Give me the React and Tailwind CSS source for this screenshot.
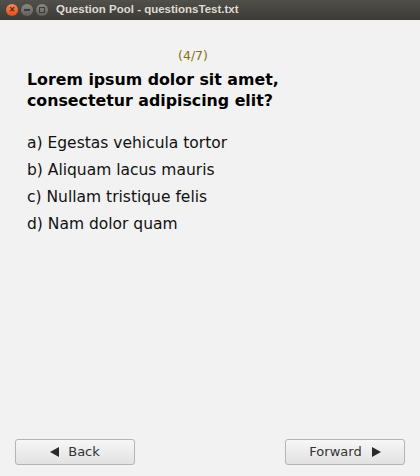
export default function App() {
  const options = [
    "a) Egestas vehicula tortor",
    "b) Aliquam lacus mauris",
    "c) Nullam tristique felis",
    "d) Nam dolor quam",
  ];

  return (
    <div className="w-[420px] h-[476px] flex flex-col bg-[#f2f2f2] overflow-hidden" style={{ fontFamily: '"DejaVu Sans", sans-serif' }}>
      {/* window title bar */}
      <div className="h-[20px] flex items-center bg-gradient-to-b from-[#504f4a] to-[#3c3b37] px-[6px]">
        <div className="flex items-center gap-[3px]">
          <span className="w-[12px] h-[12px] rounded-full bg-gradient-to-b from-[#f58a5c] to-[#e04c13] flex items-center justify-center text-[8px] leading-none text-[#5a200a] font-bold">×</span>
          <span className="w-[12px] h-[12px] rounded-full bg-gradient-to-b from-[#8a8983] to-[#62615c] flex items-center justify-center">
            <span className="w-[6px] h-[2px] bg-[#3c3b37]" />
          </span>
          <span className="w-[12px] h-[12px] rounded-full bg-gradient-to-b from-[#8a8983] to-[#62615c] flex items-center justify-center">
            <span className="w-[6px] h-[6px] border border-[#3c3b37]" />
          </span>
        </div>
        <span className="ml-[8px] text-[11.5px] font-bold text-[#dfdbd2]" style={{ fontFamily: '"Liberation Sans", sans-serif' }}>
          Question Pool - questionsTest.txt
        </span>
      </div>

      <div className="flex-1 flex flex-col px-[27px]">
        <div className="pt-[27px] text-center text-[12.5px] text-[#857300] pr-[34px]">(4/7)</div>
        <div className="mt-[3px] text-[15.8px] font-bold text-black leading-[21px]">
          Lorem ipsum dolor sit amet,<br />consectetur adipiscing elit?
        </div>
        <div className="mt-[19px] flex flex-col">
          {options.map((o) => (
            <div key={o} className="text-[15.5px] leading-[27px] text-[#111]">{o}</div>
          ))}
        </div>
      </div>

      <div className="flex justify-between px-[15px] pb-[11px]">
        <button className="w-[120px] h-[26px] rounded-[3px] border border-[#b4b4b4] bg-gradient-to-b from-[#f7f7f7] to-[#e2e2e2] flex items-center justify-center gap-[9px] text-[13px] text-[#333]">
          <svg width="9" height="10" viewBox="0 0 9 10"><path d="M0 5 L9 0 L9 10 Z" fill="#2a2a2a" /></svg>
          Back
        </button>
        <button className="w-[120px] h-[26px] rounded-[3px] border border-[#b4b4b4] bg-gradient-to-b from-[#f7f7f7] to-[#e2e2e2] flex items-center justify-center gap-[10px] text-[13px] text-[#333]">
          Forward
          <svg width="9" height="10" viewBox="0 0 9 10"><path d="M0 0 L9 5 L0 10 Z" fill="#2a2a2a" /></svg>
        </button>
      </div>
    </div>
  );
}
